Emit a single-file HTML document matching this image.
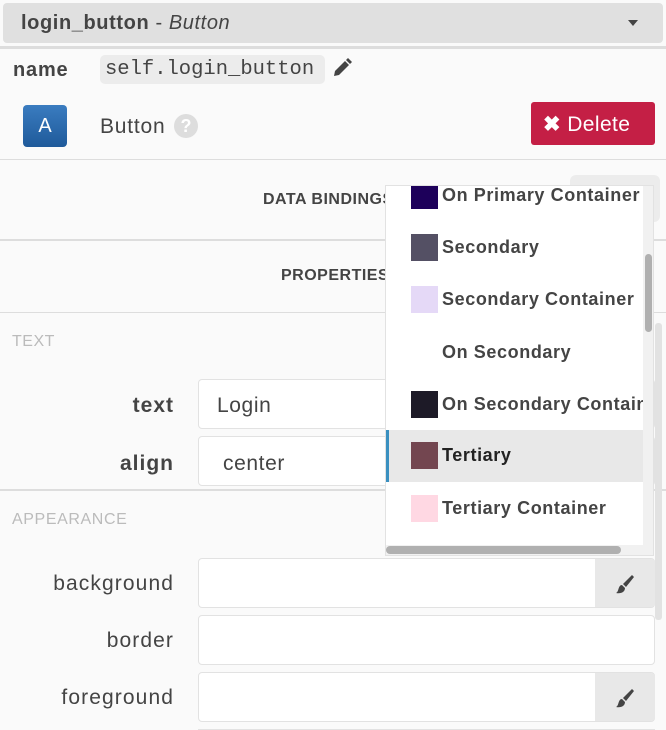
<!DOCTYPE html>
<html style="width:666px;height:730px;overflow:hidden"><head><style>
*{box-sizing:border-box;margin:0;padding:0}
body{width:666px;height:730px;overflow:hidden;background:#fafafa;font-family:"Liberation Sans",sans-serif;color:#444;position:relative}
.a{position:absolute}
.hdr{left:3px;top:3px;width:660px;height:40px;background:#e0e0e0;border-radius:4px}
.line{left:0;width:666px;background:#ddd}
.inp{background:#fff;border:1px solid #e2e2e2;border-radius:4px}
.lbl{font-size:21px;text-align:right;width:174px;left:0;letter-spacing:1.1px}
.lbl.b{font-weight:bold;letter-spacing:1px}
.item{position:absolute;left:0;width:258px;height:52px;font-weight:bold;font-size:18px;color:#444;white-space:nowrap;overflow:hidden;letter-spacing:0.6px}
.item .sw{position:absolute;left:25px;top:12px;width:27px;height:27px}
.item span{position:absolute;left:56px;top:15px}
.paint{background:#e8e8e8;border-radius:0 4px 4px 0}
</style></head><body>
<div class="a hdr"></div>
<div class="a" style="left:21px;top:12px;font-size:20px;color:#444;letter-spacing:0.6px"><b>login_button</b> - <i>Button</i></div>
<div class="a" style="left:628px;top:20px;width:0;height:0;border-left:5px solid transparent;border-right:5px solid transparent;border-top:6px solid #444"></div>
<div class="a line" style="top:46px;height:3px"></div>
<div class="a" style="left:13px;top:59px;font-size:20px;font-weight:bold;letter-spacing:0.8px">name</div>
<div class="a" style="left:100px;top:55px;width:225px;height:29px;background:#ececec;border-radius:5px;font-family:'Liberation Mono',monospace;font-size:20.5px;padding:3px 0 0 5px">self.login_button</div>
<svg class="a" style="left:331px;top:57px" width="22" height="22" viewBox="0 0 22 22"><path d="M3 19l1-5 10-10 4 4-10 10z M15 3l2-2 4 4-2 2z" fill="#444"/></svg>
<div class="a" style="left:23px;top:105px;width:44px;height:42px;border-radius:4px;background:linear-gradient(#3a7cc0,#1f5a9a);color:#fff;font-size:20px;text-align:center;line-height:42px">A</div>
<div class="a" style="left:100px;top:115px;font-size:21px;letter-spacing:0.8px">Button</div>
<div class="a" style="left:174px;top:114px;width:24px;height:24px;border-radius:50%;background:#ddd;color:#fff;font-weight:bold;font-size:18px;text-align:center;line-height:24px">?</div>
<div class="a" style="left:531px;top:102px;width:124px;height:43px;background:#c41f45;border-radius:3px;color:#fff;font-size:21px;line-height:45px;padding-left:12px;letter-spacing:0.4px"><b>✖</b> Delete</div>
<div class="a line" style="top:159px;height:1px"></div>
<div class="a" style="left:570px;top:175px;width:90px;height:47px;background:#ececec;border-radius:6px"></div>
<div class="a" style="left:263px;top:191px;font-size:16px;font-weight:bold;letter-spacing:0.5px">DATA BINDINGS</div>
<div class="a line" style="top:239px;height:2px"></div>
<div class="a" style="left:281px;top:267px;font-size:16px;font-weight:bold;letter-spacing:0.5px">PROPERTIES</div>
<div class="a line" style="top:312px;height:1px"></div>
<div class="a" style="left:12px;top:333px;font-size:16px;color:#bbb;letter-spacing:0.5px">TEXT</div>
<div class="a lbl b" style="top:394px">text</div>
<div class="a inp" style="left:198px;top:379px;width:457px;height:50px"></div>
<div class="a" style="left:217px;top:394px;font-size:21px;letter-spacing:0.6px">Login</div>
<div class="a lbl b" style="top:452px">align</div>
<div class="a inp" style="left:198px;top:436px;width:457px;height:50px"></div>
<div class="a" style="left:223px;top:452px;font-size:21px;letter-spacing:0.6px">center</div>
<div class="a line" style="top:489px;height:2px"></div>
<div class="a" style="left:12px;top:511px;font-size:16px;color:#bbb;letter-spacing:0.6px">APPEARANCE</div>
<div class="a lbl" style="top:572px">background</div>
<div class="a inp" style="left:198px;top:558px;width:457px;height:50px"></div>
<div class="a paint" style="left:595px;top:559px;width:60px;height:48px"></div>
<div class="a lbl" style="top:629px">border</div>
<div class="a inp" style="left:198px;top:615px;width:457px;height:50px"></div>
<div class="a lbl" style="top:686px">foreground</div>
<div class="a inp" style="left:198px;top:672px;width:457px;height:50px"></div>
<div class="a paint" style="left:595px;top:673px;width:60px;height:48px"></div>
<div class="a" style="left:198px;top:729px;width:457px;height:1px;background:#e2e2e2"></div>
<svg class="a" style="left:613px;top:573px" width="22" height="22" viewBox="0 0 22 22"><path d="M19 2l2 2-8 10-3-3z M9 12l3 3c0 4-4 6-9 5 3-1 2-8 6-8z" fill="#444"/></svg>
<svg class="a" style="left:613px;top:687px" width="22" height="22" viewBox="0 0 22 22"><path d="M19 2l2 2-8 10-3-3z M9 12l3 3c0 4-4 6-9 5 3-1 2-8 6-8z" fill="#444"/></svg>
<div class="a" style="left:655px;top:323px;width:7px;height:297px;background:#e2e2e2;border-radius:3px"></div>
<div class="a" style="left:385px;top:185px;width:269px;height:371px;background:#fff;border:1px solid #e2e2e2;overflow:hidden">
 <div class="item" style="top:-16px"><div class="sw" style="background:#1d005a"></div><span>On Primary Container</span></div>
 <div class="item" style="top:36px"><div class="sw" style="background:#545064"></div><span>Secondary</span></div>
 <div class="item" style="top:88px"><div class="sw" style="background:#e5d9f7"></div><span>Secondary Container</span></div>
 <div class="item" style="top:141px"><span>On Secondary</span></div>
 <div class="item" style="top:193px"><div class="sw" style="background:#1d1a27"></div><span>On Secondary Container</span></div>
 <div class="item" style="top:244px;background:#e8e8e8;border-left:3px solid #3a90c0"><div class="sw" style="background:#734650;left:22px"></div><span style="left:53px;color:#222">Tertiary</span></div>
 <div class="item" style="top:297px"><div class="sw" style="background:#ffd8e3"></div><span>Tertiary Container</span></div>
 <div class="a" style="left:257px;top:0;width:10px;height:370px;background:#f1f1f1"></div>
 <div class="a" style="left:259px;top:68px;width:7px;height:78px;background:#b0b0b0;border-radius:4px"></div>
 <div class="a" style="left:0;top:359px;width:258px;height:10px;background:#f1f1f1"></div>
 <div class="a" style="left:0;top:360px;width:235px;height:8px;background:#b0b0b0;border-radius:4px"></div>
</div>
</body></html>
